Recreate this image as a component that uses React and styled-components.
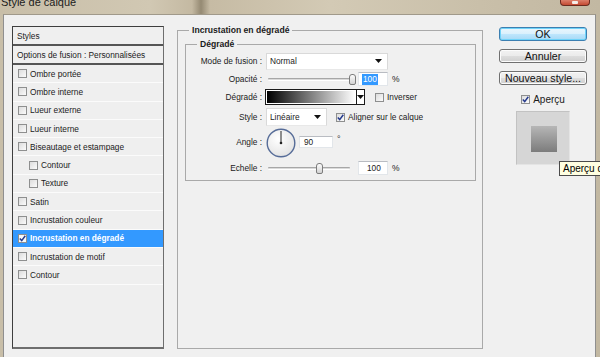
import React from "react";
import styled, { createGlobalStyle } from "styled-components";

const GlobalStyle = createGlobalStyle`
  html, body { margin: 0; padding: 0; }
  body {
    width: 600px;
    height: 357px;
    overflow: hidden;
    font-family: "Liberation Sans", Arial, sans-serif;
    color: #1b1b1b;
  }
  * { box-sizing: border-box; }
`;

const effects = [
  { label: "Ombre portée" },
  { label: "Ombre interne" },
  { label: "Lueur externe" },
  { label: "Lueur interne" },
  { label: "Biseautage et estampage" },
  { label: "Contour", indent: true },
  { label: "Texture", indent: true },
  { label: "Satin" },
  { label: "Incrustation couleur" },
  { label: "Incrustation en dégradé", checked: true, selected: true },
  { label: "Incrustation de motif" },
  { label: "Contour" }
];

const Check = ({ checked, light }) => (
  <CheckBox $light={light}>
    {checked && (
      <svg width="7" height="7" viewBox="0 0 7 7">
        <path d="M0.8 3.6 L2.7 5.6 L6.3 0.8" fill="none" stroke="#24398c" strokeWidth="1.5" />
      </svg>
    )}
  </CheckBox>
);

const Slider = ({ width, value }) => (
  <Track style={{ width }}>
    <Thumb style={{ left: value - 3 }} />
  </Track>
);

const Arrow = () => (
  <svg width="7" height="4" viewBox="0 0 7 4">
    <path d="M0 0 H7 L3.5 4 Z" fill="#111" />
  </svg>
);

const Dial = () => (
  <svg width="30" height="30" viewBox="0 0 30 30">
    <defs>
      <radialGradient id="dialFill" cx="40%" cy="35%" r="70%">
        <stop offset="0%" stopColor="#ffffff" />
        <stop offset="100%" stopColor="#e2e2e2" />
      </radialGradient>
    </defs>
    <circle cx="15" cy="15" r="13.8" fill="url(#dialFill)" stroke="#566c98" strokeWidth="1.4" />
    <line x1="15" y1="15" x2="15" y2="3" stroke="#222" strokeWidth="1" />
    <circle cx="15" cy="15" r="1.3" fill="#222" />
  </svg>
);

export default function App() {
  return (
    <Window>
      <GlobalStyle />
      <TitleBar>
        <Title>Style de calque</Title>
        <CloseButton>
          <CloseGlyph />
        </CloseButton>
      </TitleBar>
      <Body>
        <StyleList>
          <ListHeader>Styles</ListHeader>
          <ListHeader>Options de fusion : Personnalisées</ListHeader>
          {effects.map((item, index) => (
            <Row key={index} $indent={item.indent} $selected={item.selected}>
              <Check checked={item.checked} light={item.selected} />
              <span>{item.label}</span>
            </Row>
          ))}
        </StyleList>

        <MainGroup>
          <Legend $bold>Incrustation en dégradé</Legend>
          <InnerGroup>
            <InnerLegend>Dégradé</InnerLegend>
            <FormGrid>
              <Label>Mode de fusion :</Label>
              <Control>
                <Combo $width={122}>
                  <span>Normal</span>
                  <Arrow />
                </Combo>
              </Control>

              <Label>Opacité :</Label>
              <Control>
                <SliderRow>
                  <Slider width={87} value={84} />
                  <TextField $pad={3}>
                    <Selection>100</Selection>
                  </TextField>
                </SliderRow>
                <Unit>%</Unit>
              </Control>

              <Label>Dégradé :</Label>
              <Control>
                <GradientBox>
                  <GradientFill />
                  <GradientArrow>
                    <Arrow />
                  </GradientArrow>
                </GradientBox>
                <CheckLabel $gap={10}>
                  <Check />
                  <span>Inverser</span>
                </CheckLabel>
              </Control>

              <Label>Style :</Label>
              <Control>
                <Combo $width={61} $height={18}>
                  <span>Linéaire</span>
                  <Arrow />
                </Combo>
                <CheckLabel $gap={9}>
                  <Check checked />
                  <span>Aligner sur le calque</span>
                </CheckLabel>
              </Control>

              <Label>Angle :</Label>
              <Control>
                <DialWrap>
                  <Dial />
                </DialWrap>
                <TextField $width={34} $height={12} $pad={4} $gap={3}>
                  90
                </TextField>
                <Degree>°</Degree>
              </Control>

              <Label>Echelle :</Label>
              <Control>
                <SliderRow>
                  <Slider width={82} value={51} />
                  <TextField $pad={8}>100</TextField>
                </SliderRow>
                <Unit>%</Unit>
              </Control>
            </FormGrid>
          </InnerGroup>
        </MainGroup>

        <Actions>
          <Button $default>OK</Button>
          <Button>Annuler</Button>
          <Button>Nouveau style...</Button>
          <PreviewToggle>
            <Check checked />
            <span>Aperçu</span>
          </PreviewToggle>
          <PreviewBox>
            <PreviewSwatch />
            <Tooltip>Aperçu du style</Tooltip>
          </PreviewBox>
        </Actions>
      </Body>
    </Window>
  );
}

const Window = styled.div`
  width: 600px;
  height: 357px;
  display: flex;
  flex-direction: column;
  overflow: hidden;
  background: linear-gradient(
    90deg,
    #c8bea8 0%,
    #d1c8b3 25%,
    #c4b9a2 32%,
    #958a73 33.5%,
    #c6bba4 35%,
    #d3cab5 55%,
    #c9bfa9 80%,
    #c2b8a2 100%
  );
`;

const TitleBar = styled.div`
  height: 14px;
  flex: none;
  display: flex;
  justify-content: space-between;
  align-items: flex-start;
  padding: 0 10px 0 1px;
  overflow: hidden;
`;

const Title = styled.div`
  font-size: 11px;
  line-height: 12px;
  margin-top: -4px;
  color: #1c1c1c;
`;

const CloseButton = styled.div`
  width: 30px;
  height: 7px;
  margin-top: -1px;
  border: 1px solid #6b2a1f;
  border-top: none;
  border-radius: 0 0 4px 4px;
  background: linear-gradient(#e08a76, #c44a33);
  display: flex;
  justify-content: center;
`;

const CloseGlyph = styled.span`
  width: 6px;
  height: 3px;
  margin-top: 2px;
  background: #f4ece8;
  border-radius: 1px;
`;

const Body = styled.div`
  flex: 1;
  margin: 0 4px 0 3px;
  background: #f0f0f0;
  border-top: 1px solid #a0998a;
  border-left: 1px solid #8f8f8f;
  border-right: 1px solid #8f8f8f;
  display: flex;
  align-items: flex-start;
  padding: 11px 0 0 8px;
  font-size: 8.3px;
`;

const StyleList = styled.div`
  width: 152px;
  height: 323px;
  flex: none;
  border: 1px solid #3e3e3e;
  border-right-color: #6e6e6e;
  border-bottom: 2px solid #6e6e6e;
  background: #efefef;
  display: flex;
  flex-direction: column;
`;

const ListHeader = styled.div`
  height: 19px;
  flex: none;
  display: flex;
  align-items: center;
  padding-left: 4px;
  border-bottom: 2px solid #555;
  white-space: nowrap;
`;

const Row = styled.div`
  height: 18.3px;
  flex: none;
  display: flex;
  align-items: center;
  gap: 3px;
  padding-left: ${(p) => (p.$indent ? 16 : 5)}px;
  border-bottom: 1px solid #fbfbfb;
  background: ${(p) => (p.$selected ? "#3399ff" : "transparent")};
  color: ${(p) => (p.$selected ? "#fff" : "#1b1b1b")};
  font-weight: ${(p) => (p.$selected ? 700 : 400)};
  white-space: nowrap;
`;

const CheckBox = styled.span`
  width: 9px;
  height: 9px;
  flex: none;
  display: inline-flex;
  align-items: center;
  justify-content: center;
  border: 1px solid #8e8f8f;
  background: ${(p) =>
    p.$light ? "#f8f8f8" : "linear-gradient(135deg, #dcdcdc, #fbfbfb)"};
`;

const MainGroup = styled.fieldset`
  width: 306px;
  height: 324px;
  flex: none;
  margin: -1px 0 0 13px;
  padding: 4px 6px 0 7px;
  border: 1px solid #a9a9a9;
  min-width: 0;
`;

const Legend = styled.legend`
  font-size: 8.6px;
  font-weight: ${(p) => (p.$bold ? 700 : 400)};
  line-height: 10px;
  padding: 0 3px;
  margin-left: 4px;
  white-space: nowrap;
`;

const InnerGroup = styled.fieldset`
  margin: 0;
  padding: 3px 0 0 0;
  height: 142px;
  border: 1px solid #a9a9a9;
  min-width: 0;
`;

const InnerLegend = styled(Legend)`
  font-weight: 700;
  margin-left: 11px;
`;

const FormGrid = styled.div`
  display: grid;
  grid-template-columns: 76px 1fr;
  grid-template-rows: 18px 18px 18px 22px 28px 24px;
  column-gap: 4px;
  font-size: 8.3px;
`;

const Label = styled.div`
  display: flex;
  align-items: center;
  justify-content: flex-end;
  white-space: nowrap;
`;

const Control = styled.div`
  display: flex;
  align-items: center;
  white-space: nowrap;
`;

const Combo = styled.div`
  width: ${(p) => p.$width}px;
  height: ${(p) => p.$height || 17}px;
  display: flex;
  align-items: center;
  justify-content: space-between;
  padding: 0 5px 0 3px;
  background: #fff;
  border: 1px solid #d9d9d9;
  border-bottom-color: #e8e8e8;
`;

const SliderRow = styled.div`
  width: 122px;
  display: flex;
  align-items: center;
  justify-content: space-between;
`;

const Track = styled.div`
  position: relative;
  height: 3px;
  margin-left: 2px;
  border-top: 1px solid #a7a7a7;
  border-bottom: 1px solid #ffffff;
  background: #dadada;
  border-radius: 1px;
`;

const Thumb = styled.span`
  position: absolute;
  top: -5px;
  width: 7px;
  height: 11px;
  border: 1px solid #7c7c7c;
  border-radius: 3px 3px 2px 2px;
  background: linear-gradient(#fdfdfd, #d2d2d2);
`;

const TextField = styled.div`
  width: ${(p) => p.$width || 30}px;
  height: ${(p) => p.$height || 14}px;
  margin-left: ${(p) => p.$gap || 0}px;
  display: flex;
  align-items: center;
  padding-left: ${(p) => p.$pad}px;
  background: #fff;
  border: 1px solid #e2e6ea;
  border-top-color: #b9bcc2;
  font-size: 8.3px;
`;

const Selection = styled.span`
  background: #3399ff;
  color: #fff;
  padding: 0 1px;
  line-height: 11px;
`;

const Unit = styled.span`
  margin-left: 4px;
  font-size: 8.5px;
`;

const Degree = styled.span`
  margin-left: 4px;
  align-self: flex-start;
  margin-top: 6px;
  font-size: 9px;
  color: #333;
`;

const GradientBox = styled.div`
  width: 100px;
  height: 16px;
  margin-left: -1px;
  display: flex;
  border: 1px solid #1a1a1a;
  background: #fff;
`;

const GradientFill = styled.div`
  flex: 1;
  margin: 1px;
  background: linear-gradient(90deg, #000 0%, #5a5a5a 35%, #fff 100%);
`;

const GradientArrow = styled.div`
  width: 8px;
  display: flex;
  align-items: center;
  justify-content: center;
  border-left: 1px solid #1a1a1a;
`;

const CheckLabel = styled.label`
  display: flex;
  align-items: center;
  gap: 3px;
  margin-left: ${(p) => p.$gap}px;
`;

const DialWrap = styled.div`
  width: 30px;
  height: 30px;
  display: flex;
  margin-top: 2px;
`;

const Actions = styled.div`
  width: 88px;
  flex: none;
  margin: 1px 0 0 16px;
  display: flex;
  flex-direction: column;
  align-items: center;
  gap: 8px;
`;

const Button = styled.div`
  width: 88px;
  height: 14px;
  display: flex;
  align-items: center;
  justify-content: center;
  font-size: 10.6px;
  color: #111;
  border-radius: 3px;
  border: 1px solid ${(p) => (p.$default ? "#3c7fb1" : "#707070")};
  background: ${(p) =>
    p.$default
      ? "linear-gradient(#eaf6fd 0%, #d9f0fc 50%, #bee6fd 51%, #a7d9f5 100%)"
      : "linear-gradient(#f2f2f2 0%, #ebebeb 50%, #dddddd 51%, #cfcfcf 100%)"};
  box-shadow: inset 0 0 0 1px ${(p) => (p.$default ? "#6fd3f9" : "#fcfcfc")};
`;

const PreviewToggle = styled.label`
  display: flex;
  align-items: center;
  gap: 3px;
  height: 11px;
  margin-top: 1px;
  font-size: 10px;
`;

const PreviewBox = styled.div`
  position: relative;
  width: 54px;
  height: 54px;
  margin-top: -2px;
  padding: 14px;
  background: #d6d6d6;
  border: 1px solid #c2c2c2;
  border-right-color: #e4e4e4;
  border-bottom-color: #e4e4e4;
`;

const PreviewSwatch = styled.div`
  width: 26px;
  height: 26px;
  background: linear-gradient(#b6b6b6, #7c7c7c);
`;

const Tooltip = styled.div`
  position: absolute;
  left: 42px;
  top: 49px;
  height: 15px;
  padding: 0 3px;
  display: flex;
  align-items: center;
  white-space: nowrap;
  font-size: 10px;
  color: #000;
  background: #ffffe1;
  border: 1px solid #4a4a4a;
  z-index: 2;
`;
